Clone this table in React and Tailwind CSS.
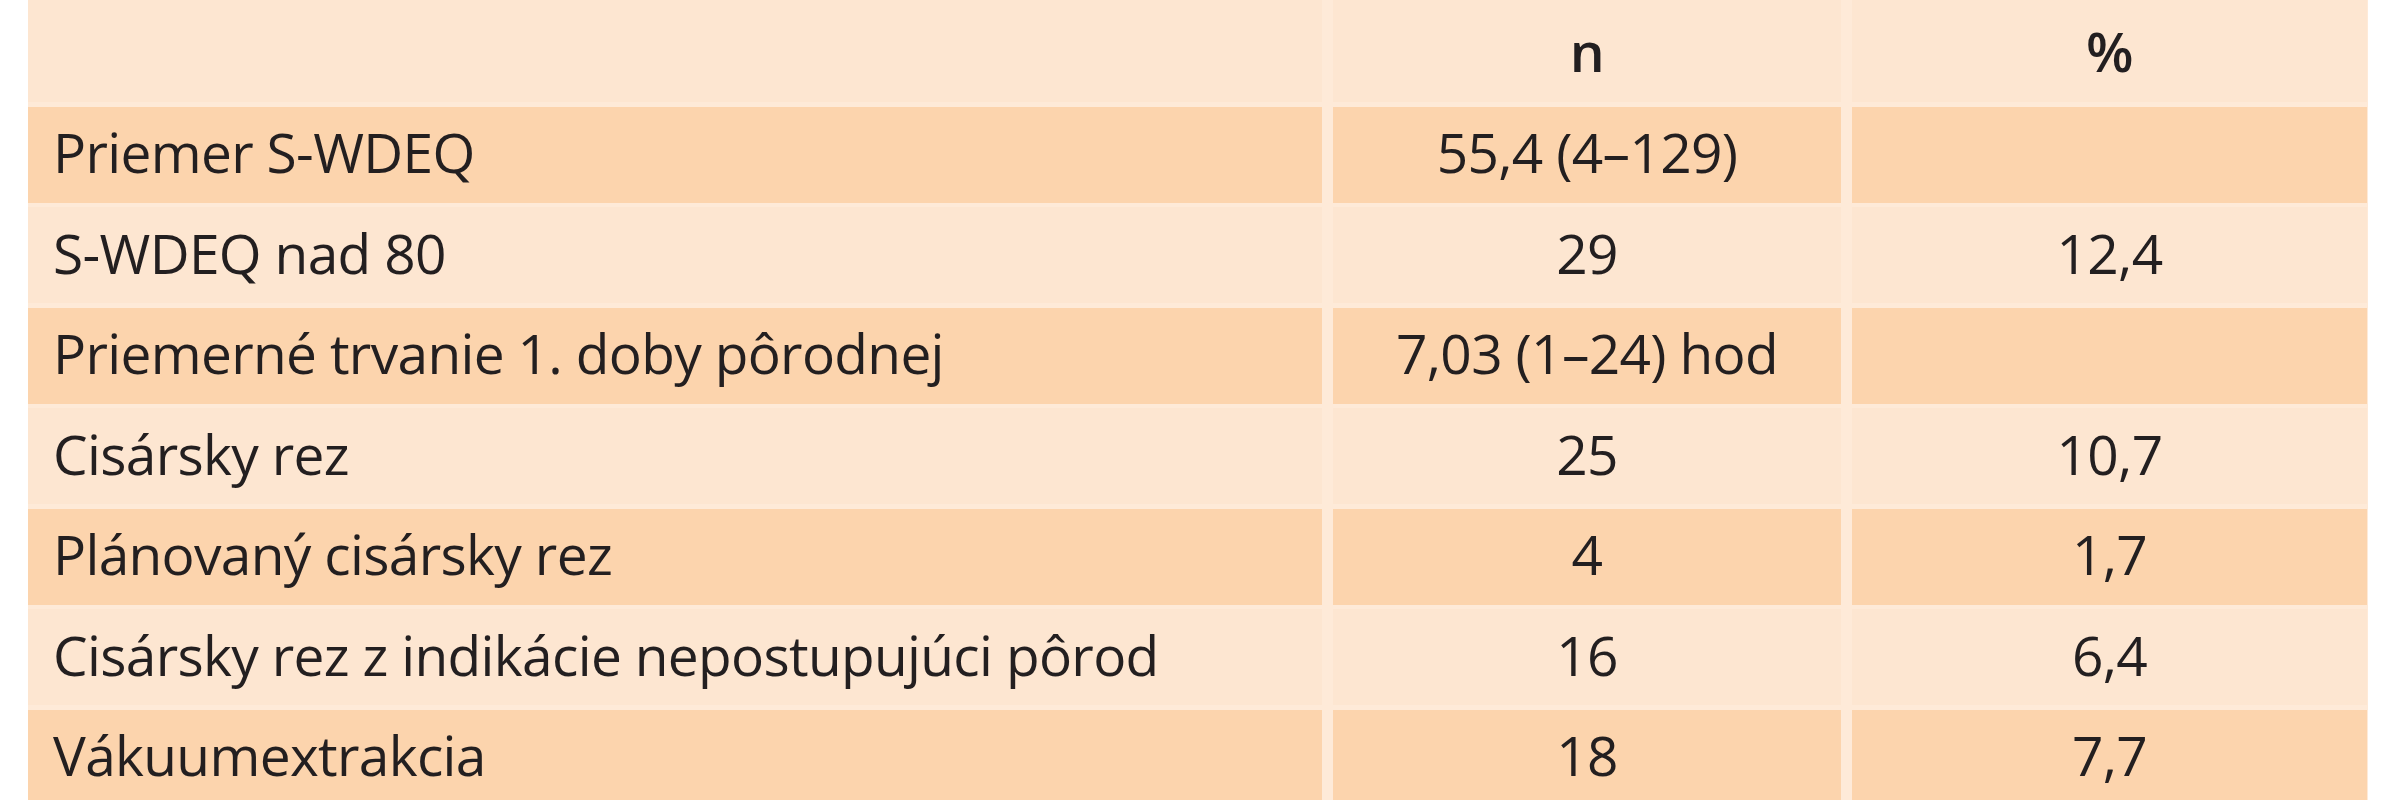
import React from "react";

const rows = [
    { label: "Priemer S-WDEQ", n: "55,4 (4–129)", pct: "" },
    { label: "S-WDEQ nad 80", n: "29", pct: "12,4" },
    { label: "Priemerné trvanie 1. doby pôrodnej", n: "7,03 (1–24) hod", pct: "" },
    { label: "Cisársky rez", n: "25", pct: "10,7" },
    { label: "Plánovaný cisársky rez", n: "4", pct: "1,7" },
    { label: "Cisársky rez z indikácie nepostupujúci pôrod", n: "16", pct: "6,4" },
    { label: "Vákuumextrakcia", n: "18", pct: "7,7" },
];

const App = () => {
    return (
        <div className="w-[2400px] h-[800px] overflow-hidden bg-white pl-[28px] pr-[32px]"
            style={{ fontFamily: '"Open Sans", "Noto Sans", sans-serif' }}>
            <div className="grid grid-cols-[1294px_508px_515px] gap-x-[11px] gap-y-[4.5px] bg-[#feead8] text-[#231f20] text-[55px] tracking-[-0.012em] leading-none">

                {/* header */}
                <div className="h-[102px] bg-[#fde6d1]"></div>
                <div className="h-[102px] bg-[#fde6d1] flex items-center justify-center font-semibold pb-[2px]">n</div>
                <div className="h-[102px] bg-[#fde6d1] flex items-center justify-center font-semibold pb-[2px]">%</div>

                {rows.map((row, i) => {
                    const bg = i % 2 === 0 ? "bg-[#fcd4ad]" : "bg-[#fde6d1]";
                    return (
                        <React.Fragment key={i}>
                            <div className={`h-[96px] ${bg} flex items-center pl-[25px] pb-[6px]`}>{row.label}</div>
                            <div className={`h-[96px] ${bg} flex items-center justify-center pb-[6px]`}>{row.n}</div>
                            <div className={`h-[96px] ${bg} flex items-center justify-center pb-[6px]`}>{row.pct}</div>
                        </React.Fragment>
                    )
                })}
            </div>
        </div>
    )
}

export default App
